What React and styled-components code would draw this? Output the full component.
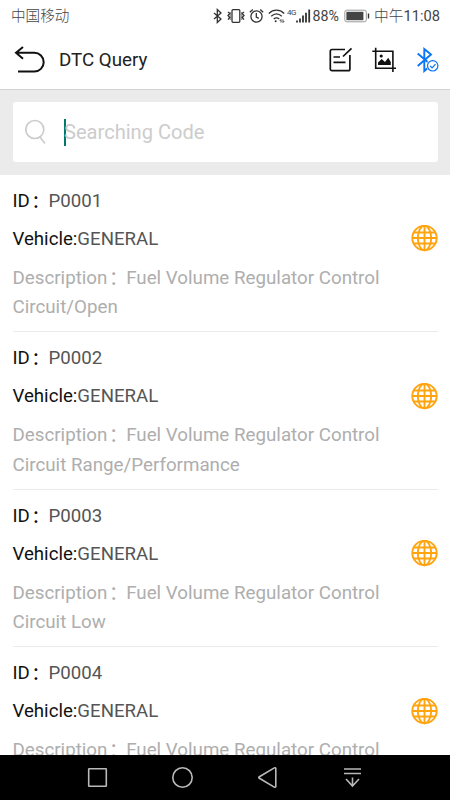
import React from 'react'
import styled, { createGlobalStyle } from 'styled-components'

const GlobalStyle = createGlobalStyle`
  * { box-sizing: border-box; }
  body {
    margin: 0;
    background: #fff;
    font-family: Roboto, "Noto Sans CJK SC", sans-serif;
  }
  svg { display: block; flex: none; }
`

const Screen = styled.div`
  width: 450px;
  height: 800px;
  display: flex;
  flex-direction: column;
  overflow: hidden;
  background: #fff;
`

const StatusBar = styled.header`
  height: 30px;
  flex: none;
  display: flex;
  align-items: center;
  padding: 1px 0 0 11px;
  color: #444;
  font-size: 14.6px;
  line-height: 29px;
  white-space: nowrap;
`

const Carrier = styled.span`
  width: 202px;
  padding-top: 1px;
  font-weight: 300;
`

const Percent = styled.span`
  width: 31px;
  margin-left: 1.5px;
  font-size: 14.2px;
  padding-top: 1px;
`

const Clock = styled.span`
  margin-left: 4.5px;
  padding-top: 1px;
  font-size: 14.7px;
  font-weight: 300;

  b { font-weight: 400; }
`

const Network = styled.span`
  width: 9px;
  height: 14px;
  margin-left: 2.5px;
  font-size: 8px;
  font-weight: 400;
  line-height: 8px;
  letter-spacing: -0.5px;
`

const StatusIcon = styled.svg`
  width: ${({ $w }) => $w}px;
  height: 16px;
  margin-left: ${({ $gap }) => $gap || 0}px;
  fill: none;
  stroke: #333;
  stroke-width: 1.3;
`

const Toolbar = styled.div`
  height: 60px;
  flex: none;
  display: flex;
  align-items: center;
  padding: 0 11px 0 14px;
  border-bottom: 1px solid #d2d2d2;
`

const Title = styled.h1`
  flex: 1;
  margin: 0 0 0 13px;
  font-size: 18.75px;
  font-weight: 400;
  color: #222;
`

const Actions = styled.div`
  display: flex;
  gap: 19px;
`

const SearchArea = styled.div`
  height: 84.5px;
  flex: none;
  padding: 12px 12.5px 12.5px;
  background: #ebebeb;
`

const SearchBox = styled.div`
  height: 60px;
  display: flex;
  align-items: center;
  padding-left: 12px;
  background: #fff;
  border-radius: 3px;
`

const Cursor = styled.span`
  width: 2px;
  height: 27px;
  margin-left: 17.5px;
  background: #00796b;
`

const Placeholder = styled.span`
  margin-left: -2px;
  font-size: 20.1px;
  color: #ccc;
`

const List = styled.main`
  flex: 1;
  min-height: 0;
  overflow: hidden;
  padding: 0 12.5px;
`

const Item = styled.article`
  height: 157.5px;
  padding-top: 13px;
  border-bottom: 1px solid #ebebeb;
`

const Line = styled.div`
  height: 26px;
  margin-bottom: 12px;
  display: flex;
  align-items: center;
  font-size: 18.65px;
  line-height: 26px;
  color: #111;
`

const Value = styled.span`
  flex: 1;
  color: #555;
`

const Colon = styled.span`
  display: inline-block;
  padding-left: 1.5px;
  margin-right: -1.5px;
  transform: translateY(1px);
`

const Description = styled.p`
  margin: 0;
  font-size: 18.75px;
  line-height: 29.5px;
  color: #aeaeae;
  white-space: nowrap;
`

const NavBar = styled.nav`
  height: 45px;
  flex: none;
  display: flex;
  align-items: center;
  justify-content: space-between;
  padding: 0 86px;
  background: #000;
`

const NavIcon = styled.svg`
  width: 23px;
  height: 23px;
  fill: none;
  stroke: #b9b9b9;
  stroke-width: 1.6;
`

const codes = [
  { id: 'P0001', text: ['Fuel Volume Regulator Control', 'Circuit/Open'] },
  { id: 'P0002', text: ['Fuel Volume Regulator Control', 'Circuit Range/Performance'] },
  { id: 'P0003', text: ['Fuel Volume Regulator Control', 'Circuit Low'] },
  { id: 'P0004', text: ['Fuel Volume Regulator Control'] },
]

const StatusIcons = () => (
  <>
    <StatusIcon $w={9} viewBox="0 0 9 16">
      <path d="M1 5l7 6-3.7 3.5v-13L8 5l-7 6" />
    </StatusIcon>
    <StatusIcon $w={18} $gap={5} viewBox="0 0 18 16">
      <rect x="5" y="1.7" width="7.8" height="12.6" rx="1" />
      <path d="M1 4l1.8 1.5L1 7.5l1.8 2L1 11.5M17 4l-1.8 1.5 1.8 2-1.8 2 1.8 2" />
      <path d="M3.2 4v8M14.8 4v8" strokeWidth=".7" />
    </StatusIcon>
    <StatusIcon $w={15} $gap={4} viewBox="0 0 15 16">
      <circle cx="7.5" cy="8.5" r="5.6" />
      <path d="M7.3 5v4l2.5 1.4M.8 4.2l3-2.7M14.2 4.2l-3-2.7" />
    </StatusIcon>
    <StatusIcon $w={17} $gap={3.5} viewBox="0 0 17 16">
      <path d="M.8 5.5c4.5-4.4 10.9-4.4 15.4 0M3.2 8.3c3.3-3 7.3-3 10.6 0M5.7 11c2-1.6 3.6-1.6 5.6 0" />
      <circle cx="7.7" cy="13.3" r="1" fill="#333" stroke="none" />
      <path d="M13 11.5v3M11.8 12.8l1.2-1.3M15 11.5v3M16.2 13.2L15 14.5" strokeWidth=".9" />
    </StatusIcon>
    <Network>4G</Network>
    <StatusIcon $w={15} viewBox="0 0 15 16">
      <path d="M1 14.5v-2M4 14.5v-4M7 14.5V7.6M10 14.5V4.7M13.2 14.5v-13" strokeWidth="1.8" />
    </StatusIcon>
  </>
)

const Battery = () => (
  <StatusIcon $w={26} viewBox="0 0 26 16">
    <rect x=".8" y="2.2" width="21.5" height="11.6" rx="2" stroke="#999" strokeWidth="1" />
    <rect x="2.4" y="3.8" width="17" height="8.4" fill="#444" stroke="none" />
    <path d="M24.5 5.5v5" strokeWidth="1.4" />
  </StatusIcon>
)

const BackIcon = () => (
  <svg width="32" height="28" viewBox="0 0 32 28" fill="none" stroke="#111" strokeWidth="2">
    <path d="M9 1L2 6.8l7 6M2 6.8h18.3a9.3 9.3 0 0 1 0 18.8H4" />
  </svg>
)

const EditIcon = () => (
  <svg width="24" height="26" viewBox="0 0 24 26" fill="none" stroke="#111" strokeWidth="1.7">
    <path d="M16 2.5H3A1.7 1.7 0 0 0 1.3 4.2V22A1.7 1.7 0 0 0 3 23.7H19.2A1.7 1.7 0 0 0 20.9 22V8M22.5 1.3L14 9.5M4.5 10h6.5M4.5 15.3h12" />
  </svg>
)

const PictureIcon = () => (
  <svg width="25" height="26" viewBox="0 0 25 26" fill="none" stroke="#111" strokeWidth="1.6">
    <path d="M.3 4.2H20.9V25M3.7.7V21.2H24" />
    <circle cx="9.2" cy="9" r="1.6" fill="#111" stroke="none" />
    <path d="M6 18v-2.5l3.7-3.5 3.3 3 3.2-4.3 2.6 4.3v3z" fill="#111" stroke="none" />
  </svg>
)

const BluetoothIcon = () => (
  <svg width="23" height="26" viewBox="0 0 23 26" fill="none" stroke="#0a75f5" strokeWidth="1.9">
    <path d="M1.7 6.5L14 17M1.7 19L15 7.5 8.3 2V24l4-3.5" />
    <circle cx="16.7" cy="18.8" r="6.3" fill="#fff" stroke="none" />
    <circle cx="16.7" cy="18.8" r="5.2" strokeWidth="1.2" />
    <path d="M14.1 18.8l2 2 3.4-3.7" strokeWidth="1.2" />
  </svg>
)

const SearchIcon = () => (
  <svg width="22" height="26" viewBox="0 0 22 26" fill="none" stroke="#ccc" strokeWidth="1.7">
    <circle cx="9.8" cy="10.5" r="9" />
    <path d="M14.8 18l5.2 6.5" />
  </svg>
)

const GlobeIcon = () => (
  <svg width="27" height="27" viewBox="0 0 27 27" fill="none" stroke="#ffa30f" strokeWidth="1.9">
    <circle cx="13.5" cy="13" r="12.2" />
    <ellipse cx="13.5" cy="13" rx="6.7" ry="12.2" />
    <path d="M13.5 1v24M1 13h25M3 7.5h21M3 18.5h21" />
  </svg>
)

const CodeItem = ({ id, text }) => (
  <Item>
    <Line>ID<Colon>{'\uff1a'}</Colon><Value>{id}</Value></Line>
    <Line>Vehicle:<Value>GENERAL</Value><GlobeIcon /></Line>
    <Description>
      Description<Colon>{'\uff1a'}</Colon>{text[0]}
      {text[1] && <><br />{text[1]}</>}
    </Description>
  </Item>
)

const App = () => (
  <>
    <GlobalStyle />
    <Screen>
      <StatusBar>
        <Carrier>中国移动</Carrier>
        <StatusIcons />
        <Percent>88%</Percent>
        <Battery />
        <Clock>中午<b>11:08</b></Clock>
      </StatusBar>
      <Toolbar>
        <BackIcon />
        <Title>DTC Query</Title>
        <Actions>
          <EditIcon />
          <PictureIcon />
          <BluetoothIcon />
        </Actions>
      </Toolbar>
      <SearchArea>
        <SearchBox>
          <SearchIcon />
          <Cursor />
          <Placeholder>Searching Code</Placeholder>
        </SearchBox>
      </SearchArea>
      <List>
        {codes.map(code => <CodeItem key={code.id} {...code} />)}
      </List>
      <NavBar>
        <NavIcon viewBox="0 0 23 23"><rect x="2.7" y="2.7" width="17.6" height="17.6" rx=".5" /></NavIcon>
        <NavIcon viewBox="0 0 23 23"><circle cx="11.5" cy="11.5" r="9.7" /></NavIcon>
        <NavIcon viewBox="0 0 23 23"><path d="M19.8 2.5V20.5a1 1 0 0 1-1.5.6L3 12a.7.7 0 0 1 0-1L18.3 1.9a1 1 0 0 1 1.5.6z" /></NavIcon>
        <NavIcon viewBox="0 0 23 23"><path d="M3 3h17M3 7.5h17M11.5 11.5v9M5 13l6.5 7 6.5-7" /></NavIcon>
      </NavBar>
    </Screen>
  </>
)

export default App
